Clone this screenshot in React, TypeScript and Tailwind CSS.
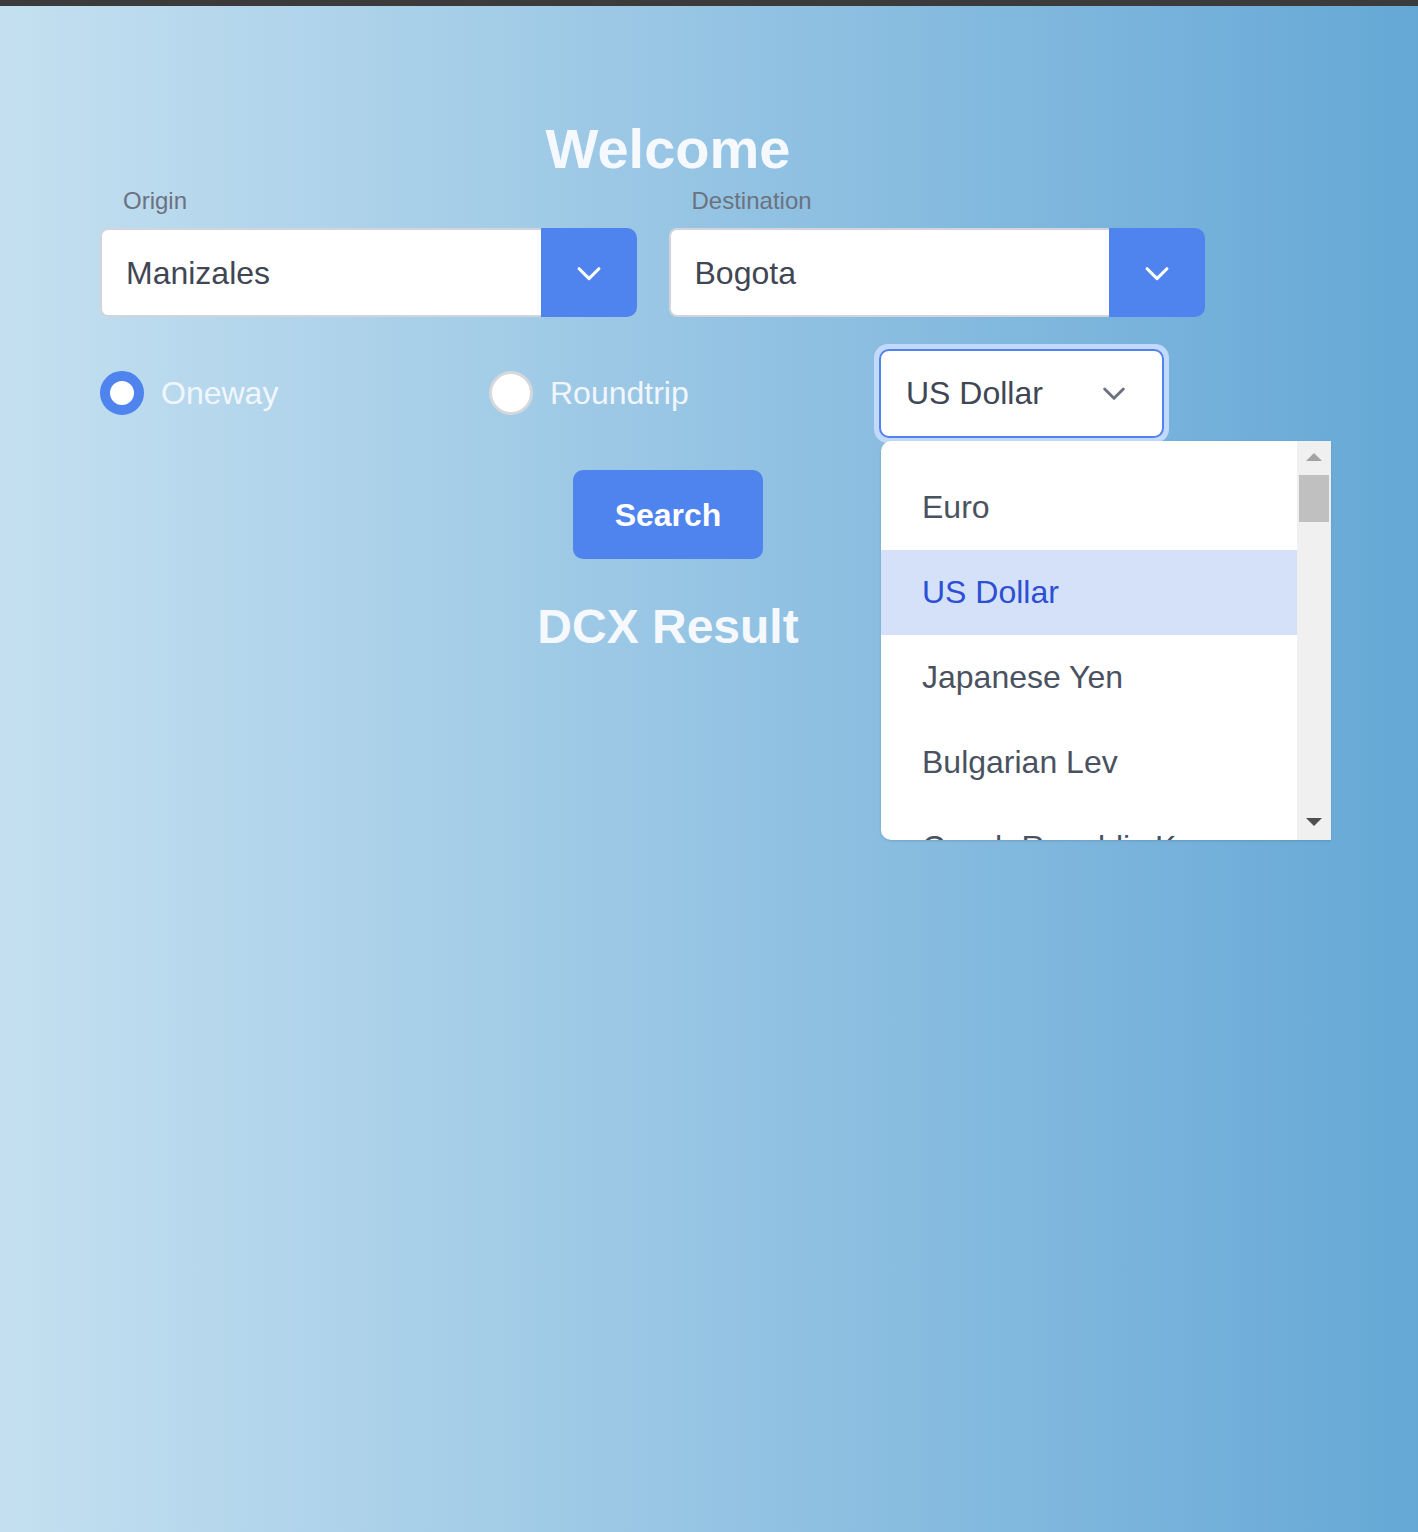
import { useState } from 'react';

const currencies = ['Euro', 'US Dollar', 'Japanese Yen', 'Bulgarian Lev', 'Czech Republic Koruna'];

function Chevron({ className }: { className?: string }) {
  return (
    <svg viewBox="0 0 24 24" className={className} fill="none" stroke="currentColor" strokeWidth={2.2} strokeLinecap="round" strokeLinejoin="round">
      <path d="M5 9l7 7 7-7" />
    </svg>
  );
}

function CitySelect({ label, value }: { label: string; value: string }) {
  return (
    <div className="flex flex-col">
      <span className="pl-[23px] text-[24px] leading-[28px] text-[#6b7280]">{label}</span>
      <div className="mt-[13px] flex h-[89px]">
        <div className="flex flex-1 items-center rounded-l-[8px] border-2 border-r-0 border-[#d1d5db] bg-white pl-[24px] text-[32px] text-[#3f4654]">
          {value}
        </div>
        <button className="flex w-[96px] items-center justify-center rounded-r-[10px] bg-[#4f83ee] text-white">
          <Chevron className="h-[34px] w-[34px]" />
        </button>
      </div>
    </div>
  );
}

function Radio({ label, checked }: { label: string; checked?: boolean }) {
  return (
    <label className="flex items-center gap-[17px]">
      <span
        className={
          checked
            ? 'h-[44px] w-[44px] rounded-full border-[10px] border-[#4f83ee] bg-white'
            : 'h-[44px] w-[44px] rounded-full border-[3px] border-[#d4d7dc] bg-white'
        }
      />
      <span className="text-[32px] text-[#f1f6fd]">{label}</span>
    </label>
  );
}

export default function App() {
  const [currency] = useState('US Dollar');

  return (
    <div
      className="min-h-[1532px] w-full bg-gradient-to-r from-[#c4e0f0] to-[#65a8d6]"
      style={{ fontFamily: '"Liberation Sans", Arial, sans-serif' }}
    >
      <div className="h-[6px] bg-[#3b3b3b]" />
      <div className="ml-[100px] w-[1136px] pt-[110px]">
        <h1 className="text-center text-[56px] font-bold leading-[66px] text-[#f5f9fe]">Welcome</h1>

        <div className="mt-[5px] grid w-[1105px] grid-cols-2 gap-[32px]">
          <CitySelect label="Origin" value="Manizales" />
          <CitySelect label="Destination" value="Bogota" />
        </div>

        <div className="mt-[26px] flex h-[100px] items-center">
          <div className="w-[389px]">
            <Radio label="Oneway" checked />
          </div>
          <div className="w-[385px]">
            <Radio label="Roundtrip" />
          </div>
          <div className="relative">
            <div className="rounded-[14px] bg-[#c2d9fb] p-[5px]">
              <div className="flex h-[89px] w-[285px] items-center justify-between rounded-[10px] border-2 border-[#4f83ee] bg-white pl-[25px] pr-[32px]">
                <span className="text-[32px] text-[#3f4654]">{currency}</span>
                <Chevron className="h-[32px] w-[32px] text-[#6b7280]" />
              </div>
            </div>

            <div className="absolute left-[7px] top-[97px] z-10 flex h-[399px] w-[450px] overflow-hidden rounded-l-[10px] bg-white shadow-sm">
              <ul className="flex-1 pt-[24px]">
                {currencies.map((c) => (
                  <li
                    key={c}
                    className={
                      c === currency
                        ? 'flex h-[85px] items-center bg-[#d5e1f9] pl-[41px] text-[32px] text-[#2c4fd4]'
                        : 'flex h-[85px] items-center whitespace-nowrap pl-[41px] text-[32px] text-[#4a5261]'
                    }
                  >
                    {c}
                  </li>
                ))}
              </ul>
              <div className="flex w-[34px] flex-col items-center bg-[#f0f0f0]">
                <div className="mt-[12px] h-0 w-0 border-x-[8px] border-b-[8px] border-x-transparent border-b-[#a3a3a3]" />
                <div className="mt-[14px] h-[47px] w-[30px] bg-[#c0c0c0]" />
                <div className="mt-auto mb-[14px] h-0 w-0 border-x-[8px] border-t-[8px] border-x-transparent border-t-[#4f4f4f]" />
              </div>
            </div>
          </div>
        </div>

        <div className="mt-[27px] flex justify-center">
          <button className="h-[89px] w-[190px] rounded-[10px] bg-[#4f83ee] text-[32px] font-bold text-white">Search</button>
        </div>

        <h2 className="mt-[40px] text-center text-[48px] font-bold leading-[56px] text-[#f5f9fe]">DCX Result</h2>
      </div>
    </div>
  );
}
